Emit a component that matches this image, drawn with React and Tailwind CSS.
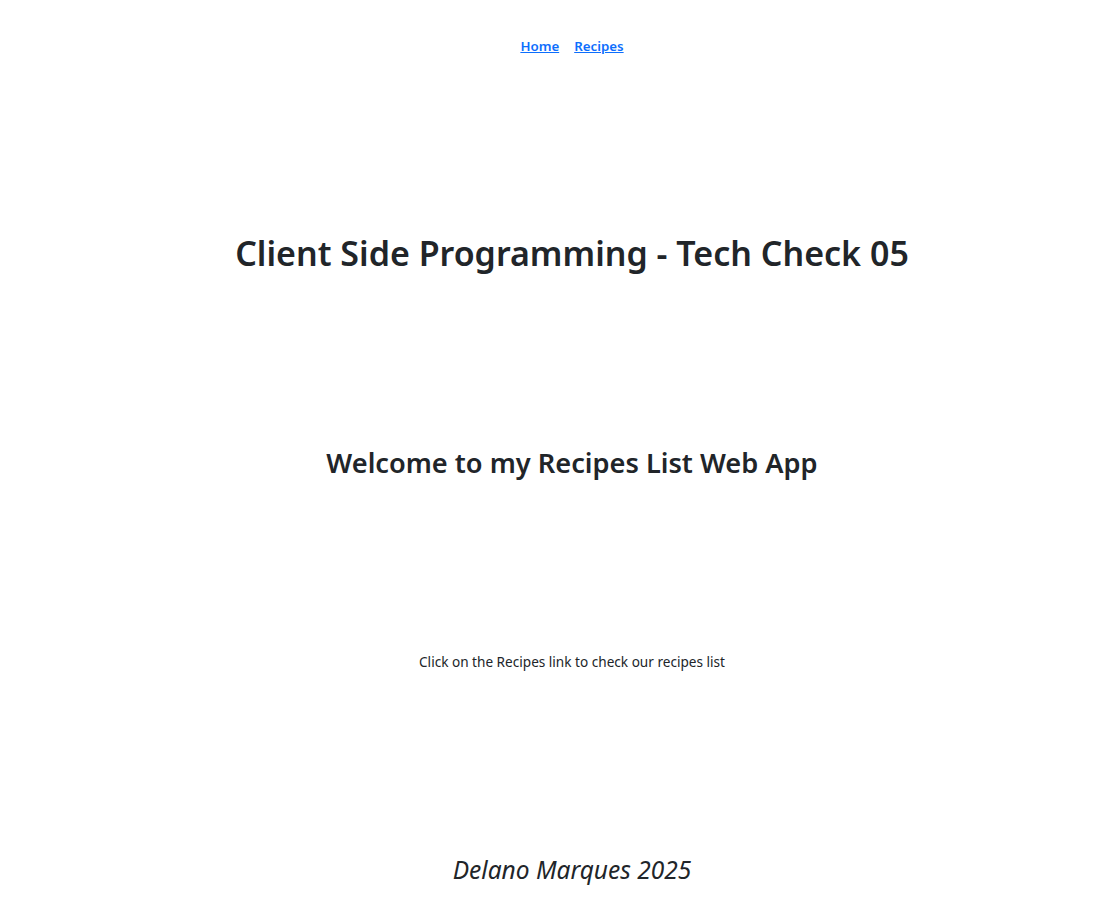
import React from 'react';

function Nav() {
    return (
        <nav className="h-[92px] pt-[2px] flex items-center justify-center gap-[15px] text-[13.3px] font-semibold">
            <a href="#" className="text-[#0d6efd] underline">Home</a>
            <a href="#" className="text-[#0d6efd] underline">Recipes</a>
        </nav>
    );
}

export default function App() {
    return (
        <div className="h-[910px] overflow-hidden bg-white text-[#212529] text-center pl-[32px]" style={{ fontFamily: '"Noto Sans", sans-serif' }}>
            <Nav />
            <div className="h-[322px] flex items-center justify-center">
                <h1 className="text-[34px] font-semibold leading-tight">Client Side Programming - Tech Check 05</h1>
            </div>
            <div className="h-[98px] flex items-center justify-center">
                <h2 className="text-[27.2px] font-semibold leading-tight">Welcome to my Recipes List Web App</h2>
            </div>
            <div className="h-[300px] flex items-center justify-center">
                <p className="text-[13.6px]">Click on the Recipes link to check our recipes list</p>
            </div>
            <footer className="h-[98px] pt-[18px] flex items-center justify-center">
                <p className="text-[24.5px] italic">Delano Marques 2025</p>
            </footer>
        </div>
    );
}
